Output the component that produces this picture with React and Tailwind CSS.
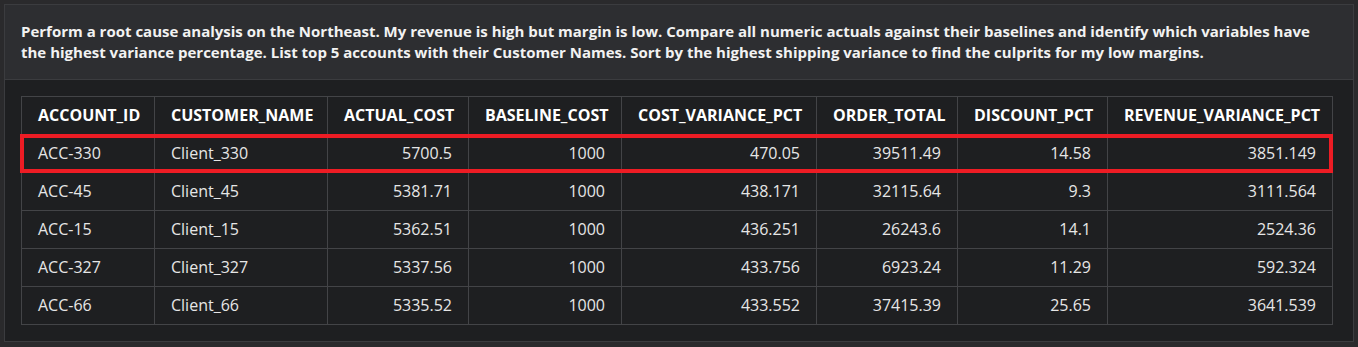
import React from 'react';

const columns = [
  { key: 'account', label: 'ACCOUNT_ID', w: 'w-[133px]', align: 'text-left' },
  { key: 'customer', label: 'CUSTOMER_NAME', w: 'w-[173px]', align: 'text-left' },
  { key: 'actual', label: 'ACTUAL_COST', w: 'w-[141px]', align: 'text-right' },
  { key: 'baseline', label: 'BASELINE_COST', w: 'w-[153px]', align: 'text-right' },
  { key: 'costVar', label: 'COST_VARIANCE_PCT', w: 'w-[195px]', align: 'text-right' },
  { key: 'order', label: 'ORDER_TOTAL', w: 'w-[141px]', align: 'text-right' },
  { key: 'discount', label: 'DISCOUNT_PCT', w: 'w-[150px]', align: 'text-right' },
  { key: 'revVar', label: 'REVENUE_VARIANCE_PCT', w: 'w-[225px]', align: 'text-right' },
];

const rows = [
  ['ACC-330', 'Client_330', '5700.5', '1000', '470.05', '39511.49', '14.58', '3851.149'],
  ['ACC-45', 'Client_45', '5381.71', '1000', '438.171', '32115.64', '9.3', '3111.564'],
  ['ACC-15', 'Client_15', '5362.51', '1000', '436.251', '26243.6', '14.1', '2524.36'],
  ['ACC-327', 'Client_327', '5337.56', '1000', '433.756', '6923.24', '11.29', '592.324'],
  ['ACC-66', 'Client_66', '5335.52', '1000', '433.552', '37415.39', '25.65', '3641.539'],
];

export default function App() {
  return (
    <div className="min-h-screen bg-[#2a2a2c] p-1 font-['Open_Sans','Noto_Sans',sans-serif]">
      <div className="border border-[#3b3c3f] bg-[#1e1f21]">
        {/* prompt */}
        <div className="bg-[#2d2e31] border-b border-[#3b3c3f] px-4 py-4">
          <p className="text-[15px] font-bold text-[#f2f2f2] leading-[21px]">
            Perform a root cause analysis on the Northeast. My revenue is high but margin is low. Compare all numeric actuals against their baselines and identify which variables have the highest variance percentage. List top 5 accounts with their Customer Names. Sort by the highest shipping variance to find the culprits for my low margins.
          </p>
        </div>

        {/* result table */}
        <div className="p-4">
          <div className="relative w-fit">
            <table className="w-[1312px] border-collapse table-fixed text-[16px]">
              <thead>
                <tr>
                  {columns.map((c) => (
                    <th
                      key={c.key}
                      className={`${c.w} ${c.align} whitespace-nowrap border border-[#434447] px-4 py-2 leading-[21px] font-bold text-white`}
                    >
                      {c.label}
                    </th>
                  ))}
                </tr>
              </thead>
              <tbody>
                {rows.map((r) => (
                  <tr key={r[0]}>
                    {r.map((v, i) => (
                      <td
                        key={i}
                        className={`${columns[i].align} border border-[#434447] px-4 py-2 leading-[21px] text-[#e6e6e6]`}
                      >
                        {v}
                      </td>
                    ))}
                  </tr>
                ))}
              </tbody>
            </table>
            {/* highlight annotation */}
            <div className="absolute left-[-1px] top-[38px] h-[39px] w-[1313px] border-4 border-[#ed1c24] pointer-events-none" />
          </div>
        </div>
      </div>
    </div>
  );
}
